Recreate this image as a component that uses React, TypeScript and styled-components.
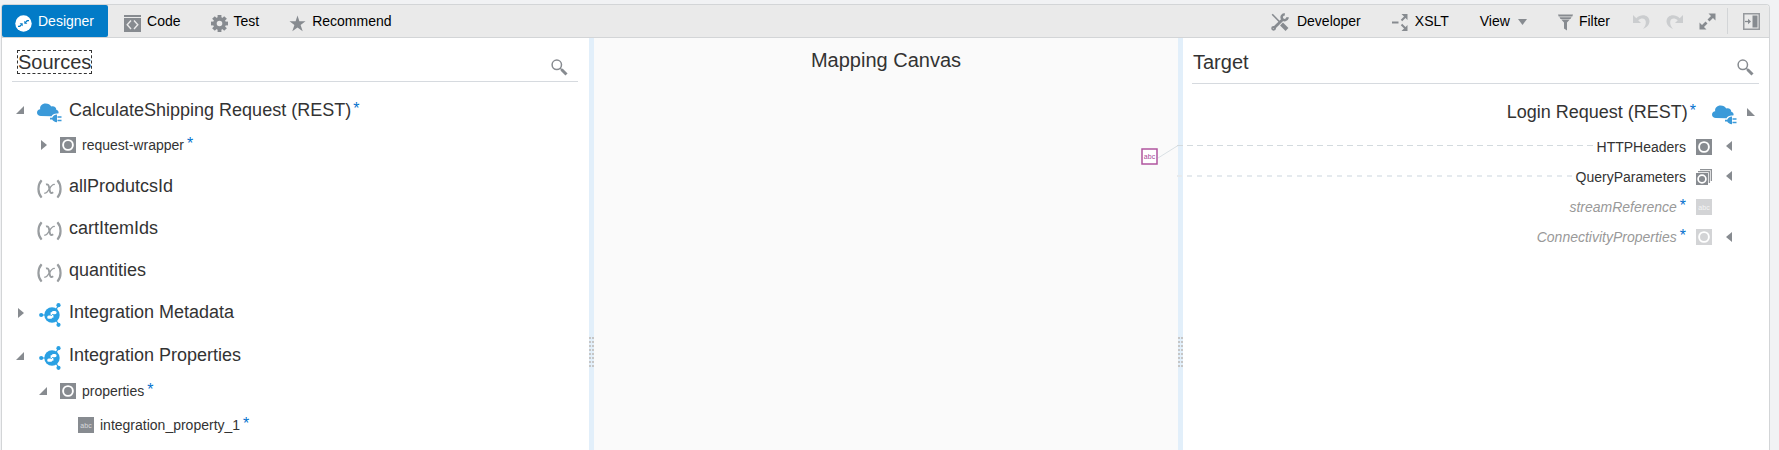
import React from "react";
import styled, { createGlobalStyle, css } from "styled-components";

const GREY = "#878b90";
const BLUE = "#3b9ad9";

const GlobalStyle = createGlobalStyle`
  *, *::before, *::after { box-sizing: border-box; }
  body {
    margin: 0;
    background: #f1f2f4;
    color: #333333;
    font-family: "Liberation Sans", Arial, sans-serif;
    font-size: 14px;
  }
  button { font: inherit; color: inherit; border: 0; padding: 0; background: none; cursor: pointer; }
  ul { list-style: none; margin: 0; padding: 0; }
  svg { display: block; flex: none; }
`;

const Page = styled.div`
  min-height: 100vh;
  padding: 4px 9px 0 1px;
  display: flex;
`;

const Mapper = styled.main`
  flex: 1;
  min-width: 0;
  display: flex;
  flex-direction: column;
  border: 1px solid #d3d5d7;
  border-bottom: 0;
  border-radius: 4px 4px 0 0;
  background: #ffffff;
`;

const Toolbar = styled.header`
  display: flex;
  align-items: center;
  height: 33px;
  padding-right: 9px;
  background: #eaeaea;
  border-bottom: 1px solid #d3d5d7;
  border-radius: 3px 3px 0 0;
  color: #000000;
`;

const Tabs = styled.nav`
  display: flex;
  gap: 3px;
  flex: 1;
`;

const Tab = styled.button<{ $active?: boolean }>`
  display: flex;
  align-items: center;
  gap: 6px;
  height: 32px;
  padding: 0 14px 0 13px;
  white-space: nowrap;
  svg { margin-top: 4px; }
  ${(p) => p.$active && css`
    background: #027bc7;
    color: #ffffff;
    border-radius: 2px;
  `}
`;

const Actions = styled.div`
  display: flex;
  align-items: center;
  gap: 31px;
`;

const Action = styled.button<{ $gap?: number }>`
  display: flex;
  align-items: center;
  gap: ${(p) => p.$gap ?? 6}px;
  height: 32px;
  white-space: nowrap;
  svg { margin-top: 2px; }
`;

const IconActions = styled.div`
  display: flex;
  align-items: center;
  gap: 16px;
  margin-left: 23px;
`;

const IconAction = styled.button<{ $faded?: boolean }>`
  color: ${(p) => (p.$faded ? "#cbcdcf" : GREY)};
`;

const Divider = styled.span`
  width: 1px;
  height: 26px;
  margin: 0 15px 0 11px;
  background: #d3d5d7;
`;

const Panes = styled.div`
  flex: 1;
  display: grid;
  grid-template-columns: minmax(0, 587fr) 5px minmax(0, 584fr) 5px minmax(0, 586fr);
`;

const SidePane = styled.section`
  background: #ffffff;
`;

const CanvasPane = styled.section`
  position: relative;
  background: #fafafa;
  text-align: center;
`;

const PaneHeader = styled.div<{ $target?: boolean }>`
  display: flex;
  justify-content: space-between;
  height: ${(p) => (p.$target ? 46 : 44)}px;
  margin: ${(p) => (p.$target ? "0 10px 0 9px" : "0 11px 0 10px")};
  padding: ${(p) => (p.$target ? "12px 5px 0 0" : "12px 10px 0 5px")};
  border-bottom: 1px solid #d6dadf;
`;

const Title = styled.h2<{ $focused?: boolean }>`
  margin: 0;
  height: 24px;
  font-size: 20px;
  line-height: 22px;
  font-weight: 400;
  border: 1px dashed ${(p) => (p.$focused ? "#333333" : "transparent")};
`;

const CanvasTitle = styled(Title)`
  margin-top: 10px;
`;

const SearchButton = styled.button`
  display: flex;
  align-self: flex-start;
  padding-top: 9px;
`;

const Splitter = styled.div`
  background: #e2effa;
`;

const Grip = styled.div`
  width: 5px;
  height: 30px;
  margin-top: 299px;
  display: flex;
  justify-content: space-between;
  &::before, &::after {
    content: "";
    width: 2px;
    background: repeating-linear-gradient(to bottom, #c6c6c6 0 2px, transparent 2px 4px);
  }
`;

const SourceTree = styled.ul`
  padding-top: 7px;
`;

const SourceRow = styled.li<{ $level: number; $tall?: boolean }>`
  display: flex;
  align-items: center;
  height: ${(p) => (p.$level ? 34 : p.$tall ? 43 : 42)}px;
  padding-left: ${(p) => [14, 37, 55][p.$level]}px;
  padding-bottom: ${(p) => (p.$level ? 6 : 0)}px;
  font-size: ${(p) => (p.$level ? 14 : 18)}px;
  white-space: nowrap;
`;

const TargetTree = styled.ul`
  padding-top: 8px;
`;

const TargetRow = styled.li<{ $level: number; $muted?: boolean }>`
  display: flex;
  align-items: center;
  justify-content: flex-end;
  height: ${(p) => (p.$level ? 30 : 40)}px;
  margin-left: -6px;
  padding-right: ${(p) => (p.$level ? 35 : 14)}px;
  font-size: ${(p) => (p.$level ? 14 : 18)}px;
  white-space: nowrap;
  ${(p) => p.$muted && css`
    color: #999999;
    font-style: italic;
  `}
`;

const Toggle = styled.button<{ $raised?: boolean }>`
  display: flex;
  width: 8px;
  height: ${(p) => (p.$raised ? 12 : 10)}px;
  &:disabled { visibility: hidden; }
`;

const NodeIcon = styled.span<{ $level: number; $target?: boolean; $low?: boolean }>`
  display: flex;
  justify-content: center;
  width: ${(p) => (p.$level ? 16 : 25)}px;
  margin: ${(p) =>
    p.$target
      ? p.$level ? "0 14px 0 10px" : "0 10px 0 16px"
      : p.$level ? "0 6px 0 13px" : "0 7px 0 13px"};
  padding-top: ${(p) => (p.$level ? 0 : p.$low ? 6 : 4)}px;
`;

const Required = styled.sup<{ $small: boolean }>`
  margin-left: ${(p) => (p.$small ? 3 : 2)}px;
  font-size: 16px;
  line-height: 0;
  font-style: normal;
  vertical-align: ${(p) => (p.$small ? 1 : 2)}px;
  color: #0572ce;
`;

const Link = styled.span<{ $light?: boolean }>`
  position: relative;
  flex: 1;
  height: ${(p) => (p.$light ? 2 : 1)}px;
  margin: 0 4px 3px 0;
  background: repeating-linear-gradient(
    to right,
    ${(p) => (p.$light ? "#e5eaee 0 5px, transparent 5px 10px" : "#d3dade 0 6px, transparent 6px 10px")}
  );
`;

const MappedNode = styled.div`
  position: absolute;
  top: 106px;
  right: 0;
`;

type IconName = "cloud" | "variable" | "integration" | "object" | "list" | "text";

const Cloud = () => (
  <svg width="25" height="20" viewBox="0 0 25 20">
    <path fill={BLUE} d="M4 13C1.600 13 0 11.600 0 9.700C0 7.800 1.500 6.500 3.200 6.300C2.600 3 5 .5 8.600 .5C11.200 .5 13.200 1.600 14.200 3.400C17.400 2.800 19.200 4.500 19.300 6.700C21 7.300 21.800 8.500 21.600 10.200L20.500 10.600C17.500 10.400 15.600 11.400 14.500 13.200Z" />
    <path fill={BLUE} d="M13 14.800H15.200C16 13 17.600 11.800 20 11.600V19.200C17.600 19.100 15.900 18.200 15.200 16.600H13Z" />
    <path stroke={BLUE} strokeWidth="1.400" d="M20.500 14H24.500M20.500 17.500H24.500" />
  </svg>
);

const Variable = () => (
  <svg width="25" height="20" viewBox="0 0 25 20" fill="none" stroke="#999da0">
    <path strokeWidth="2.200" d="M4.600 1.200C.4 6 .4 13.800 4.600 18.600M20.400 1.200C24.600 6 24.600 13.800 20.400 18.600" />
    <path strokeWidth="1.900" d="M9 5.500C11.200 4.900 11.700 6.300 12.200 8.800L12.800 11.800C13.200 13.900 14.200 14.600 16.200 13.200" />
    <path strokeWidth="1.300" d="M17.800 5.600C15.800 4.800 14.200 7 12.500 9.800C10.800 12.600 9.500 15 7.200 14" />
  </svg>
);

const Integration = () => (
  <svg width="24" height="24" viewBox="-1 0 24 24">
    <path stroke="#29a0e3" strokeWidth="1.200" d="M2 12H8M16 8L19.500 2.500M16 16L19.500 21" />
    <circle cx="2.200" cy="12" r="2.100" fill="#29a0e3" />
    <circle cx="19.500" cy="2.200" r="2.100" fill="#29a0e3" />
    <circle cx="19.500" cy="21.800" r="2.100" fill="#29a0e3" />
    <circle cx="13" cy="12" r="7.700" fill="#29a0e3" />
    <g stroke="#ffffff" strokeLinecap="round">
      <path strokeWidth="3.200" d="M9.800 14.200H11.800M14.200 9.600H16" />
      <path strokeWidth="1.400" d="M12 14L13.800 13.800L13.600 12.400M14 10L12.300 10L12.300 11.400" fill="none" />
    </g>
  </svg>
);

const ObjectIcon = ({ color = GREY }: { color?: string }) => (
  <svg width="16" height="16" viewBox="0 0 16 16">
    <rect width="16" height="16" fill={color} />
    <circle cx="8" cy="8" r="4.900" fill="none" stroke="#ffffff" strokeWidth="1.900" />
  </svg>
);

const ListIcon = () => (
  <svg width="16" height="16" viewBox="0 0 16 16">
    <path fill="none" stroke="#8f9296" strokeWidth="1.300" d="M2 2.600H13.400V14M4 .6H15.400V12" />
    <rect y="4" width="12" height="12" fill={GREY} />
    <circle cx="6" cy="10" r="3.900" fill="none" stroke="#ffffff" strokeWidth="1.700" />
  </svg>
);

const TextIcon = ({ color, ink }: { color: string; ink: string }) => (
  <svg width="16" height="16" viewBox="0 0 16 16">
    <rect width="16" height="16" fill={color} />
    <text x="8" y="11" textAnchor="middle" fontSize="7" fontStyle="normal" fill={ink}>abc</text>
  </svg>
);

const renderIcon = (name: IconName, muted?: boolean) => {
  const color = muted ? "#d3d4d6" : GREY;
  switch (name) {
    case "cloud": return <Cloud />;
    case "variable": return <Variable />;
    case "integration": return <Integration />;
    case "list": return <ListIcon />;
    case "text": return <TextIcon color={color} ink={muted ? "#f4f4f5" : "#d8dadc"} />;
    default: return <ObjectIcon color={color} />;
  }
};

const arrows = {
  open: "M8 1V9H0Z",
  closed: "M2 0L8 5L2 10Z",
  openLeft: "M0 1V9H8Z",
  closedLeft: "M6 0L0 5L6 10Z",
};

const Arrow = ({ kind }: { kind: keyof typeof arrows }) => (
  <svg width="8" height="10" viewBox="0 0 8 10"><path fill={GREY} d={arrows[kind]} /></svg>
);

const Search = () => (
  <svg width="17" height="17" viewBox="0 0 17 17" fill="none" stroke={GREY}>
    <circle cx="5.800" cy="5.800" r="4.700" strokeWidth="1.500" />
    <path strokeWidth="1.500" d="M9 9L11 11" />
    <path strokeWidth="3" d="M10.500 10.500L15.500 15.500" />
  </svg>
);

interface TreeNode {
  label: string;
  icon: IconName;
  level: number;
  state?: "open" | "closed";
  required?: boolean;
  muted?: boolean;
  link?: "mapped" | "light";
}

const sources: TreeNode[] = [
  { label: "CalculateShipping Request (REST)", icon: "cloud", level: 0, state: "open", required: true },
  { label: "request-wrapper", icon: "object", level: 1, state: "closed", required: true },
  { label: "allProdutcsId", icon: "variable", level: 0 },
  { label: "cartItemIds", icon: "variable", level: 0 },
  { label: "quantities", icon: "variable", level: 0 },
  { label: "Integration Metadata", icon: "integration", level: 0, state: "closed" },
  { label: "Integration Properties", icon: "integration", level: 0, state: "open" },
  { label: "properties", icon: "object", level: 1, state: "open", required: true },
  { label: "integration_property_1", icon: "text", level: 2, required: true },
];

const targets: TreeNode[] = [
  { label: "Login Request (REST)", icon: "cloud", level: 0, state: "open", required: true },
  { label: "HTTPHeaders", icon: "object", level: 1, state: "closed", link: "mapped" },
  { label: "QueryParameters", icon: "list", level: 1, state: "closed", link: "light" },
  { label: "streamReference", icon: "text", level: 1, required: true, muted: true },
  { label: "ConnectivityProperties", icon: "object", level: 1, state: "closed", required: true, muted: true },
];

const Label = ({ node }: { node: TreeNode }) => (
  <span>{node.label}{node.required && <Required $small={node.level > 0}>*</Required>}</span>
);

const gearTeeth = [0, 45, 90, 135, 180, 225, 270, 315];

export default function App() {
  return (
    <Page>
      <GlobalStyle />
      <Mapper>
        <Toolbar>
          <Tabs>
            <Tab $active>
              <svg width="17" height="17" viewBox="0 0 17 17">
                <circle cx="8.500" cy="8.500" r="8.200" fill="#ffffff" />
                <path stroke="#027bc7" strokeWidth="1.300" fill="none" d="M3 11.300H4.800L6.500 9.600M14 5.700H12.200L10.500 7.400" />
                <path fill="#027bc7" d="M4.600 8.200H7.700V11.300ZM12.400 8.800H9.300V5.700Z" />
              </svg>
              Designer
            </Tab>
            <Tab>
              <svg width="17" height="17" viewBox="0 0 17 17">
                <path fill={GREY} d="M0 0H17V2H0ZM0 3H17V17H0Z" />
                <path fill="none" stroke="#eaeaea" strokeWidth="1.400" d="M7 5.500L3.200 9.800L7 14M10 5.500L13.800 9.800L10 14" />
              </svg>
              Code
            </Tab>
            <Tab>
              <svg width="17" height="17" viewBox="0 0 17 17">
                {gearTeeth.map((angle) => (
                  <rect key={angle} x="6.600" y="0" width="3.800" height="5" fill={GREY} transform={`rotate(${angle} 8.500 8.500)`} />
                ))}
                <circle cx="8.500" cy="8.500" r="4.600" fill="none" stroke={GREY} strokeWidth="3.600" />
              </svg>
              Test
            </Tab>
            <Tab>
              <svg width="17" height="17" viewBox="0 0 17 17">
                <path fill={GREY} d="M8.500 .5L10.400 6.300H16.500L11.600 9.900L13.700 16.300L8.500 12.400L3.300 16.300L5.400 9.900L.5 6.300H6.600Z" />
              </svg>
              Recommend
            </Tab>
          </Tabs>
          <Actions>
            <Action $gap={8}>
              <svg width="18" height="18" viewBox="0 0 18 18" fill="none" stroke={GREY}>
                <path strokeWidth="1.600" d="M1.200 1.200L8.500 8.800" />
                <path strokeWidth="4" d="M10.500 11L16 16.500" />
                <path strokeWidth="2.800" d="M12.200 6L2.500 15.500" />
                <path strokeWidth="2.600" d="M13.800 1.300C10.800 1.500 10 4.300 11.300 6C12.700 8 16 7.500 16.800 4.300" />
                <circle cx="2.600" cy="15.300" r="1.600" strokeWidth="1.600" />
              </svg>
              Developer
            </Action>
            <Action>
              <svg width="17" height="18" viewBox="0 0 17 18">
                <path stroke={GREY} strokeWidth="2" d="M0 9.500H6.500M9.500 7.500L13.500 3.500M9.500 11.500L13.500 15.500" />
                <path fill={GREY} d="M9.500 1H15.500V7ZM15.500 12V18H9.500Z" />
              </svg>
              XSLT
            </Action>
            <Action $gap={8}>
              View
              <svg width="9" height="6" viewBox="0 0 9 6"><path fill={GREY} d="M0 0H9L4.500 6Z" /></svg>
            </Action>
            <Action>
              <svg width="15" height="17" viewBox="0 0 15 17">
                <path fill={GREY} d="M0 .5H15L14.300 2.500H.7ZM1.500 3.300H13.500L12.500 5H2.500ZM3.200 5.600H11.800L9 8.600V16.500L6 14.500V8.600Z" />
              </svg>
              Filter
            </Action>
          </Actions>
          <IconActions>
            <IconAction $faded aria-label="Undo">
              <svg width="17" height="17" viewBox="0 0 17 17">
                <path fill="currentColor" d="M0 2V10H8L5.200 7.200C8.500 4.500 12.300 5 12.800 8.800C13 11.500 12 13.800 10 16C14 14.500 16.500 11.500 16.500 8C16 2 8.500 .3 3.300 5.200Z" />
              </svg>
            </IconAction>
            <IconAction $faded aria-label="Redo">
              <svg width="17" height="17" viewBox="0 0 17 17">
                <path fill="currentColor" d="M17 2V10H9L11.800 7.200C8.500 4.500 4.700 5 4.200 8.800C4 11.500 5 13.800 7 16C3 14.500 .5 11.500 .5 8C1 2 8.500 .3 13.700 5.200Z" />
              </svg>
            </IconAction>
            <IconAction aria-label="Maximize">
              <svg width="17" height="17" viewBox="0 0 17 17">
                <path stroke="currentColor" strokeWidth="2.800" d="M9.500 7.500L14 3M7.500 9.500L3 14" />
                <path fill="currentColor" d="M9.500 .5H16.500V7.500ZM.5 9.500V16.500H7.500Z" />
              </svg>
            </IconAction>
          </IconActions>
          <Divider />
          <IconAction aria-label="Toggle side panel">
            <svg width="17" height="17" viewBox="0 0 17 17">
              <rect x=".75" y=".75" width="15.500" height="15.500" fill="none" stroke="#96999d" strokeWidth="1.500" />
              <rect x="9.500" y="2.500" width="5" height="12" fill="currentColor" />
              <path stroke="currentColor" strokeWidth="1.300" d="M2 8.500H6" />
              <path fill="currentColor" d="M5 5.800L8 8.500L5 11.200Z" />
            </svg>
          </IconAction>
        </Toolbar>
        <Panes>
          <SidePane>
            <PaneHeader>
              <Title $focused tabIndex={-1}>Sources</Title>
              <SearchButton aria-label="Search sources"><Search /></SearchButton>
            </PaneHeader>
            <SourceTree>
              {sources.map((node) => (
                <SourceRow key={node.label} $level={node.level} $tall={node.icon === "integration"}>
                  <Toggle disabled={!node.state} aria-label={`Toggle ${node.label}`}>
                    {node.state && <Arrow kind={node.state} />}
                  </Toggle>
                  <NodeIcon $level={node.level} $low={node.icon !== "integration"}>{renderIcon(node.icon)}</NodeIcon>
                  <Label node={node} />
                </SourceRow>
              ))}
            </SourceTree>
          </SidePane>
          <Splitter role="separator"><Grip /></Splitter>
          <CanvasPane>
            <CanvasTitle>Mapping Canvas</CanvasTitle>
            <MappedNode>
              <svg width="37" height="22" viewBox="0 0 37 22">
                <path stroke="#d9e0e4" fill="none" d="M17 14L37 1.500" />
                <rect x="1" y="5" width="15" height="15" fill="#ffffff" stroke="#b0559f" strokeWidth="1.500" />
                <text x="8.500" y="15" textAnchor="middle" fontSize="7" fill="#a8479a">abc</text>
              </svg>
            </MappedNode>
          </CanvasPane>
          <Splitter role="separator"><Grip /></Splitter>
          <SidePane>
            <PaneHeader $target>
              <Title>Target</Title>
              <SearchButton aria-label="Search target"><Search /></SearchButton>
            </PaneHeader>
            <TargetTree>
              {targets.map((node) => (
                <TargetRow key={node.label} $level={node.level} $muted={node.muted}>
                  {node.link && <Link $light={node.link === "light"} />}
                  <Label node={node} />
                  <NodeIcon $level={node.level} $target $low>{renderIcon(node.icon, node.muted)}</NodeIcon>
                  <Toggle disabled={!node.state} $raised={!!node.link} aria-label={`Toggle ${node.label}`}>
                    {node.state && <Arrow kind={node.state === "open" ? "openLeft" : "closedLeft"} />}
                  </Toggle>
                </TargetRow>
              ))}
            </TargetTree>
          </SidePane>
        </Panes>
      </Mapper>
    </Page>
  );
}
